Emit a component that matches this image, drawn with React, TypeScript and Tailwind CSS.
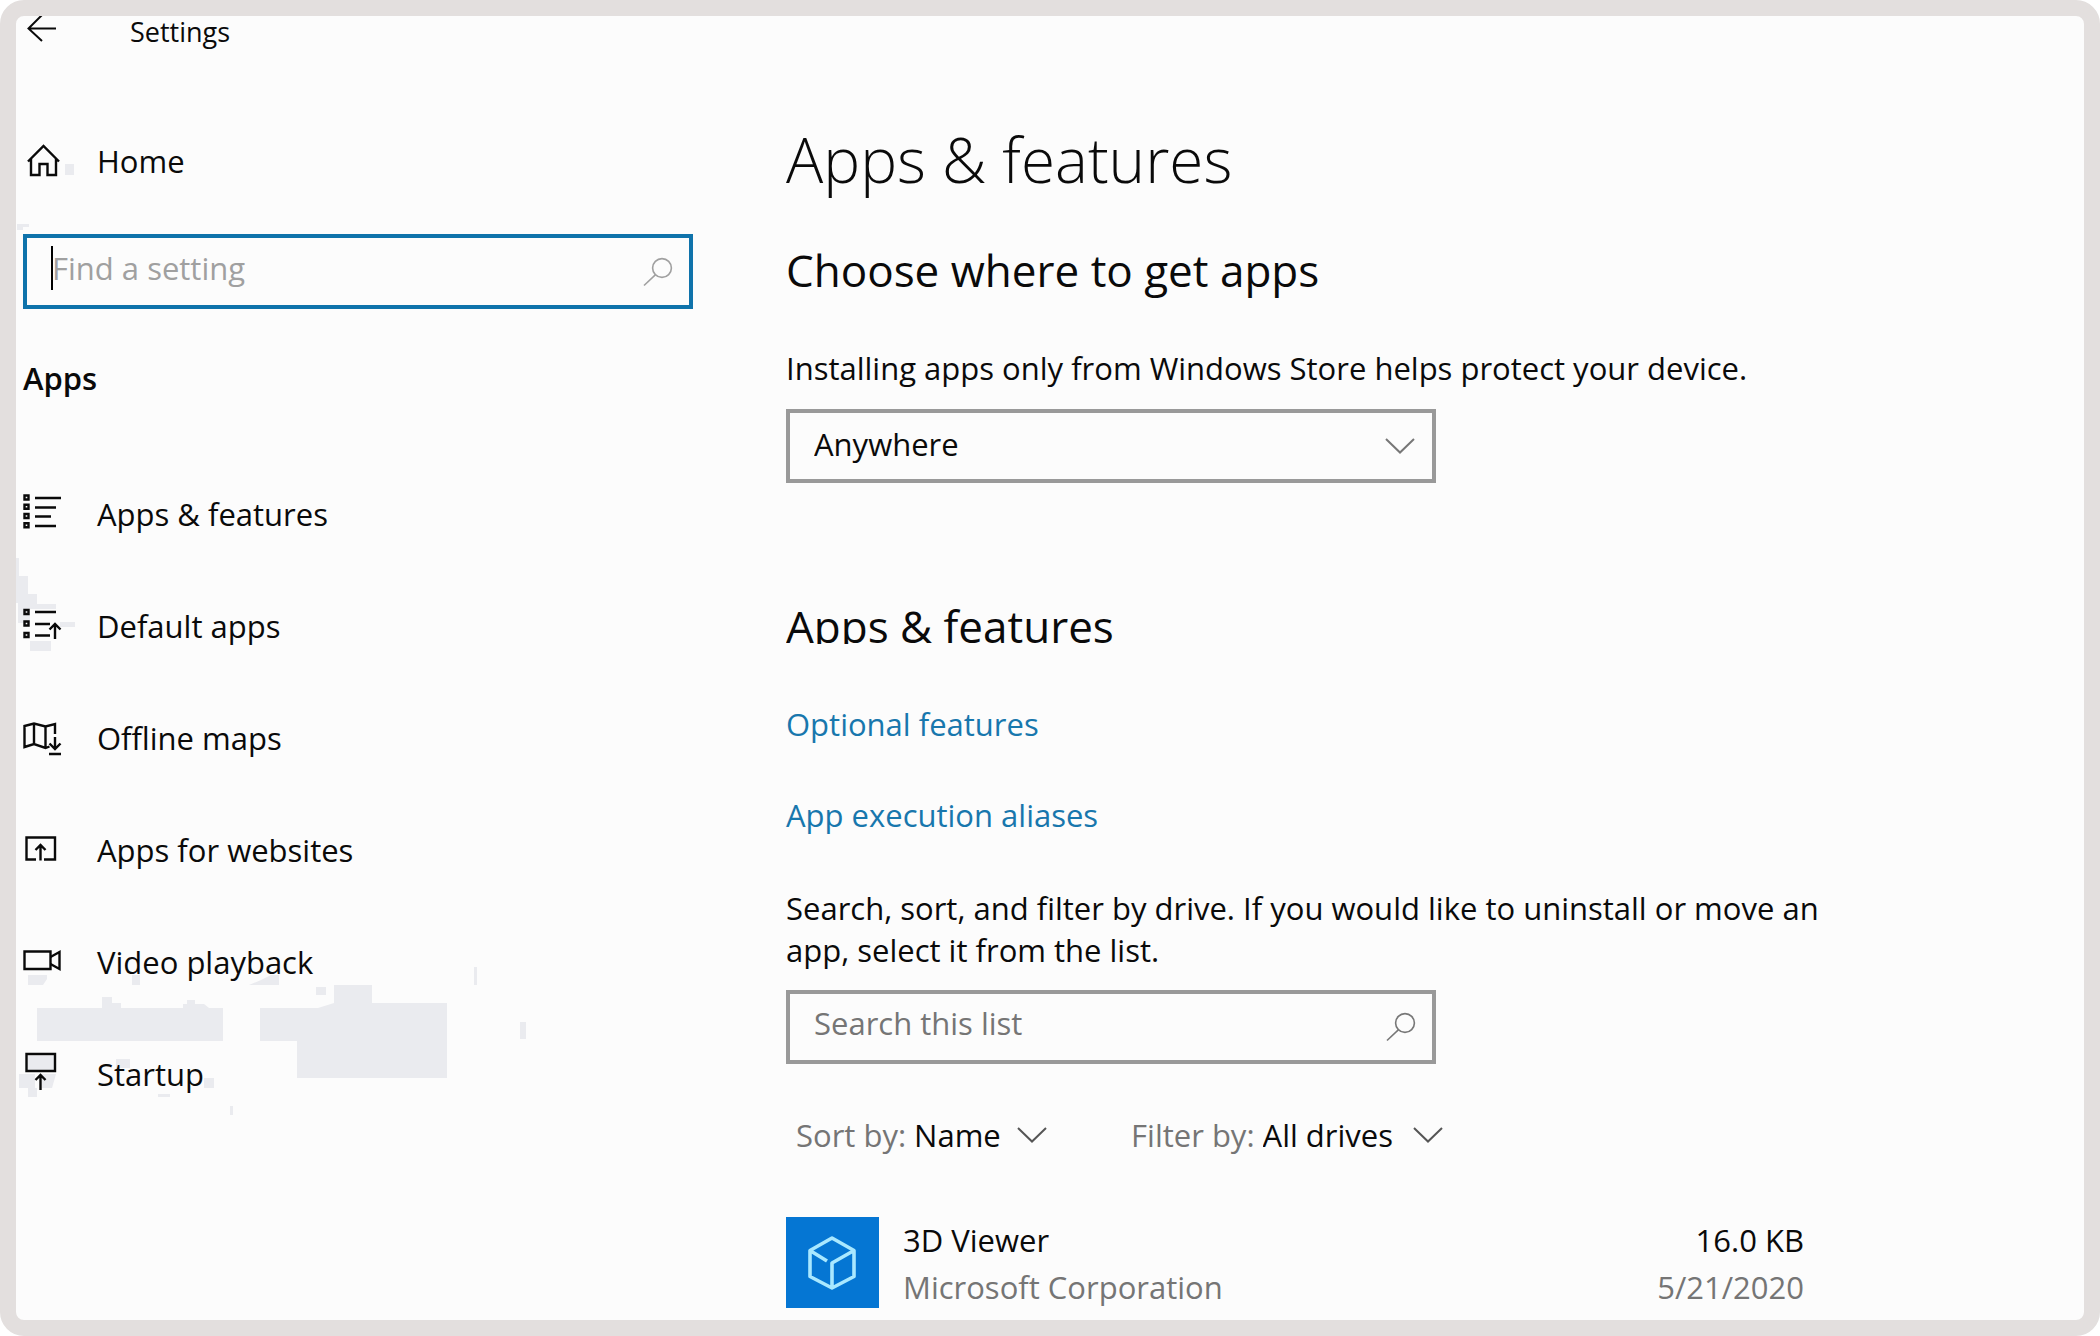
import type { ReactNode } from "react";

function Icon({ children }: { children: ReactNode }) {
  return (
    <svg
      viewBox="0 0 40 40"
      className="mt-1 h-10 w-10 shrink-0 overflow-visible"
      fill="none"
      stroke="currentColor"
      strokeWidth="2.4"
      aria-hidden="true"
    >
      {children}
    </svg>
  );
}

function Chevron({ className = "" }: { className?: string }) {
  return (
    <svg
      viewBox="0 0 30 16"
      className={`pointer-events-none h-4 w-[30px] ${className}`}
      fill="none"
      stroke="currentColor"
      strokeWidth="2"
      aria-hidden="true"
    >
      <path d="M1 1 15 14.500 29 1" />
    </svg>
  );
}

function Magnifier({ className = "" }: { className?: string }) {
  return (
    <svg
      viewBox="0 0 30 30"
      className={`pointer-events-none absolute top-1/2 h-[30px] w-[30px] -translate-y-1/2 ${className}`}
      fill="none"
      stroke="currentColor"
      strokeWidth="1.6"
      aria-hidden="true"
    >
      <circle cx="19" cy="11" r="9.400" />
      <path d="M12.300 17.800 1 28.500" />
    </svg>
  );
}

const navItems: { label: string; icon: ReactNode }[] = [
  {
    label: "Apps & features",
    icon: (
      <>
        <path d="M1.500-.5h4v4h-4zM1.500 8.700h4v4h-4zM1.500 18h4v4h-4zM1.500 27.300h4v4h-4z" />
        <path d="M12 2h26M12 11.500h21M12 20.500h16M12 30h21" />
      </>
    ),
  },
  {
    label: "Default apps",
    icon: (
      <>
        <path d="M1.500 2h4v4h-4zM1.500 13.500h4v4h-4zM1.500 25h4v4h-4z" />
        <path d="M12 4h21M12 16h15M12 27.500h15" />
        <path d="M32 31V16M26.500 21.500 32 16l5.500 5.500" />
      </>
    ),
  },
  {
    label: "Offline maps",
    icon: (
      <>
        <path d="M32 14V4l-9.500 2.500L11 3.500 1.500 6v21l9.500-3 11.500 4 4-1.500M11 3.500V24M22.500 6.500V28" />
        <path d="M32 17v12M26.500 23.500 32 29l5.500-5.500M26 34h12" />
      </>
    ),
  },
  {
    label: "Apps for websites",
    icon: (
      <>
        <path d="M13 27.500H3.500V5.500h28.500v22H21" />
        <path d="M17.500 28.500V13M12.500 18l5-5 5 5" />
      </>
    ),
  },
  {
    label: "Video playback",
    icon: (
      <>
        <path d="M1.500 7.500h26V25h-26z" />
        <path d="m27.500 13 9-5v17l-9-5" />
      </>
    ),
  },
  {
    label: "Startup",
    icon: (
      <>
        <path d="M3.500-2h28.500v17h-28.500z" />
        <path d="M17.500 34V19M12.500 24l5-5 5 5" />
      </>
    ),
  },
];

function Smudges() {
  return (
    <svg
      viewBox="0 0 560 1180"
      className="pointer-events-none absolute -top-4 -left-4 h-[1180px] w-[560px]"
      fill="#eaebef"
      aria-hidden="true"
    >
      <path d="M65 164h9v11h-9zM17 224h12v3h-6v3h-6z" />
      <path d="M16 558h3v18h9v18h9v10h19v5H30v14h-12v-20h-2zM30 641h21v10H30zM60 622h15v5H60z" />
      <path d="M28 975h19v4l-4 6H28zM132 975h8v10h-8zM249 985l12-5 10-5h8v10z" />
      <path d="M37 1008h65v-11h10v6h9v5h62v-4h4v-4h8v4h9l5 4h14v33H37z" />
      <path d="M260 1008h58l16-5v-18h38v18h75v75H297v-37h-37z" />
      <path d="M316 987h10v8h-10zM474 967h3v18h-3zM520 1022h6v17h-6zM230 1106h3v9h-3z" />
      <path d="M27 1056h29v14H27zM19 1074h16v14H19zM42 1074h14l-4 14H42zM28 1088h9v9h-9zM116 1059h14v9h-14zM204 1078h10v10h-10zM158 1094h12v3h-12z" />
    </svg>
  );
}

export default function App() {
  return (
    <div className="min-h-screen bg-white font-['Open_Sans','Noto_Sans',sans-serif] text-[31px] leading-10 text-[#0a0a0a]">
      <div className="relative min-h-screen rounded-[24px] border-16 border-[#e3dfde] bg-[#fcfcfc]">
        <Smudges />
        <div className="relative flex">
          <aside className="w-[770px] shrink-0 pr-[93px] pl-[7px]">
            <header className="flex h-8 items-center">
              <button type="button" aria-label="Back" className="flex h-8 w-[107px] items-start pl-1">
                <svg
                  viewBox="0 0 30 26"
                  className="h-[26px] w-[30px]"
                  fill="none"
                  stroke="currentColor"
                  strokeWidth="2"
                  aria-hidden="true"
                >
                  <path d="M29 12.500H1.500M15-1 1.500 12.500 15 25" />
                </svg>
              </button>
              <span className="text-[27px] leading-7">Settings</span>
            </header>

            <a href="#home" className="mt-[93px] flex h-10 items-center gap-[34px]">
              <Icon>
                <path d="M5 18.500 20.500 3 36 18.500M8 16v16h8.500V21h8v11H33V16" />
              </Icon>
              Home
            </a>

            <div className="relative mt-[53px]">
              <input
                type="text"
                aria-label="Find a setting"
                placeholder="Find a setting"
                className="block h-[75px] w-full border-4 border-[#0f73ab] bg-transparent pr-16 pb-2 pl-[25px] outline-none placeholder:text-[#a0a0a0] placeholder:opacity-100"
              />
              <span className="absolute top-3 left-7 h-11 w-[2px] bg-black" />
              <Magnifier className="right-5 text-[#a0a0a0]" />
            </div>

            <h2 className="mt-[49px] font-semibold">Apps</h2>

            <nav className="mt-[60px] flex flex-col">
              {navItems.map((item) => (
                <a key={item.label} href="#apps" className="flex h-28 items-center gap-[34px]">
                  <Icon>{item.icon}</Icon>
                  {item.label}
                </a>
              ))}
            </nav>
          </aside>

          <main className="max-w-[1040px] min-w-0 flex-1 pt-[103px]">
            <h1 className="text-[62px] leading-[80px] font-light">Apps &amp; features</h1>

            <h2 className="mt-[43px] text-[44px] leading-14">Choose where to get apps</h2>
            <label htmlFor="source" className="mt-[50px] block">
              Installing apps only from Windows Store helps protect your device.
            </label>
            <div className="relative mt-[21px] w-[650px]">
              <select
                id="source"
                className="block h-[74px] w-full appearance-none border-4 border-[#999] bg-transparent pb-1 pl-6"
              >
                <option>Anywhere</option>
              </select>
              <Chevron className="absolute top-[29px] right-[21px] text-[#777]" />
            </div>

            <h2 className="mt-[115px] h-[46px] overflow-hidden text-[44px] leading-14">Apps &amp; features</h2>
            <a href="#optional" className="mt-[60px] block w-fit text-[#1877ad]">
              Optional features
            </a>
            <a href="#aliases" className="mt-[51px] block w-fit text-[#1877ad]">
              App execution aliases
            </a>

            <p className="mt-[52px] leading-[42px]">
              Search, sort, and filter by drive. If you would like to uninstall or move an app, select it from the list.
            </p>
            <div className="relative mt-[19px] w-[650px]">
              <input
                type="text"
                aria-label="Search this list"
                placeholder="Search this list"
                className="block h-[74px] w-full border-4 border-[#999] bg-transparent pr-16 pb-2 pl-6 outline-none placeholder:text-[#757575] placeholder:opacity-100"
              />
              <Magnifier className="right-5 text-[#777]" />
            </div>

            <div className="mt-[51px] flex h-10 items-center gap-[84px] pl-[10px]">
              <div className="relative flex items-center gap-2">
                <label htmlFor="sort" className="text-[#757575]">
                  Sort by:
                </label>
                <select id="sort" className="w-[133px] appearance-none bg-transparent">
                  <option>Name</option>
                </select>
                <Chevron className="absolute right-0 text-[#555]" />
              </div>
              <div className="relative flex items-center gap-2">
                <label htmlFor="filter" className="text-[#757575]">
                  Filter by:
                </label>
                <select id="filter" className="w-[180px] appearance-none bg-transparent">
                  <option>All drives</option>
                </select>
                <Chevron className="absolute right-0 text-[#555]" />
              </div>
            </div>

            <ul className="mt-[62px]">
              <li className="flex w-full max-w-[1018px] items-start">
                <div className="flex h-[91px] w-[93px] items-center justify-center bg-[#0576d3]">
                  <svg
                    viewBox="0 0 50 56"
                    className="h-14 w-[50px]"
                    fill="none"
                    stroke="#a9e8ff"
                    strokeWidth="3.600"
                    strokeLinejoin="round"
                    aria-hidden="true"
                  >
                    <path d="M24 3 46 15.500v26L24 53 2 41.500v-26zM2 15.500 19 26M46 15.500 24 28V53" />
                  </svg>
                </div>
                <div className="ml-6 flex-1 leading-[47px]">
                  <div>3D Viewer</div>
                  <div className="text-[#757575]">Microsoft Corporation</div>
                </div>
                <div className="text-right leading-[47px]">
                  <div>16.0 KB</div>
                  <div className="text-[#757575]">5/21/2020</div>
                </div>
              </li>
            </ul>
          </main>
        </div>
      </div>
    </div>
  );
}
